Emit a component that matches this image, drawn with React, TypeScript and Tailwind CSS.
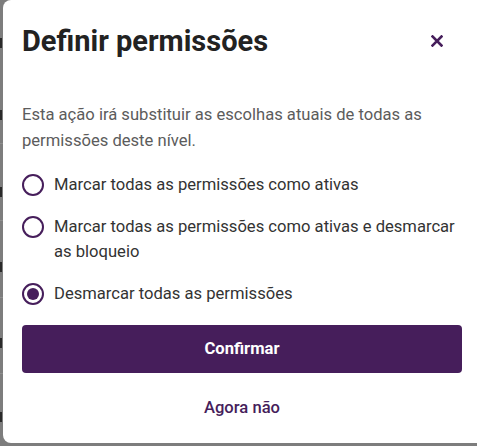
import React from "react";

const PURPLE = "#461e5b";

function Radio({ checked }: { checked?: boolean }) {
  return (
    <span className="mt-[2px] flex h-[22px] w-[22px] shrink-0 items-center justify-center rounded-full border-[2px] border-[#461e5b] bg-white">
      {checked && <span className="h-[12px] w-[12px] rounded-full bg-[#461e5b]" />}
    </span>
  );
}

export default function App() {
  const rows = [43, 115, 192, 267, 343, 417];
  const lines = [143, 220, 297, 373];
  return (
    <div
      className="relative flex h-[446px] w-[477px] overflow-hidden bg-[#7d7d7d]"
      style={{ fontFamily: "Roboto, 'Liberation Sans', sans-serif" }}
    >
      {lines.map((y) => (
        <div key={y} className="absolute left-0 h-px w-[3px] bg-[#8e8e8e]" style={{ top: y }} />
      ))}
      {rows.map((y) => (
        <div key={y} className="absolute left-0 h-[10px] w-[2px] bg-[#2a2a2a]" style={{ top: y - 5 }} />
      ))}
      <div className="relative z-10 ml-[3px] flex h-[443px] w-[480px] shrink-0 flex-col rounded-l-[8px] bg-white pl-[19px] pr-[18px]">
        <div className="flex items-center justify-between pt-[24px]">
          <h1 className="text-[29px] font-bold leading-[34px] text-[#222222]">Definir permissões</h1>
          <button className="mr-[16px] flex h-[24px] w-[24px] items-center justify-center">
            <svg width="12" height="12" viewBox="0 0 12 12">
              <path d="M1.5 1.5 L10.5 10.5 M10.5 1.5 L1.5 10.5" stroke={PURPLE} strokeWidth="2.6" strokeLinecap="square" />
            </svg>
          </button>
        </div>
        <p className="mt-[44px] w-[440px] text-[16.6px] leading-[26px] text-[#5c5c5c]">
          Esta ação irá substituir as escolhas atuais de todas as permissões deste nível.
        </p>
        <div className="mt-[18px] flex w-[440px] flex-col gap-[17px]">
          <label className="flex items-start gap-[10px]">
            <Radio />
            <span className="text-[16.6px] leading-[25px] text-[#333333]">Marcar todas as permissões como ativas</span>
          </label>
          <label className="flex items-start gap-[10px]">
            <Radio />
            <span className="text-[16.6px] leading-[25px] text-[#333333]">
              Marcar todas as permissões como ativas e desmarcar as bloqueio
            </span>
          </label>
          <label className="flex items-start gap-[10px]">
            <Radio checked />
            <span className="text-[16.6px] leading-[25px] text-[#333333]">Desmarcar todas as permissões</span>
          </label>
        </div>
        <button className="mt-[19px] flex h-[48px] w-[440px] items-center justify-center rounded-[4px] bg-[#461e5b] text-[16.6px] font-bold text-white">
          Confirmar
        </button>
        <button className="mt-[11px] flex h-[48px] w-[440px] items-center justify-center text-[16.6px] font-medium text-[#461e5b]">
          Agora não
        </button>
      </div>
    </div>
  );
}
